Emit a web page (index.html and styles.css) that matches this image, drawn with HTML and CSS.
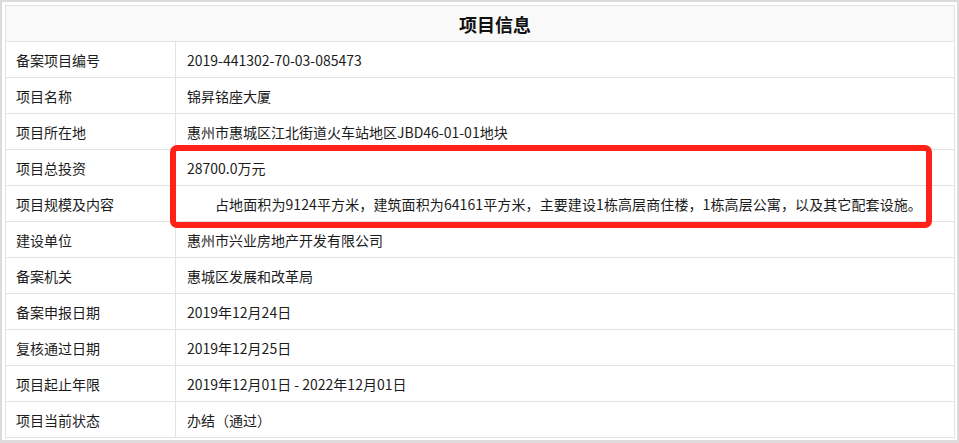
FILE: index.html
```html
<!DOCTYPE html>
<html lang="zh-CN">
<head>
<meta charset="utf-8">
<title>项目信息</title>
<link rel="stylesheet" href="styles.css">
</head>
<body>
<div class="panel">
  <table class="info">
    <colgroup>
      <col class="col-label">
      <col class="col-value">
    </colgroup>
    <thead>
      <tr><th colspan="2" class="title">项目信息</th></tr>
    </thead>
    <tbody>
      <tr><td class="label">备案项目编号</td><td class="value">2019-441302-70-03-085473</td></tr>
      <tr><td class="label">项目名称</td><td class="value">锦昇铭座大厦</td></tr>
      <tr><td class="label">项目所在地</td><td class="value">惠州市惠城区江北街道火车站地区JBD46-01-01地块</td></tr>
      <tr><td class="label">项目总投资</td><td class="value">28700.0万元</td></tr>
      <tr><td class="label">项目规模及内容</td><td class="value indent">占地面积为9124平方米，建筑面积为64161平方米，主要建设1栋高层商住楼，1栋高层公寓，以及其它配套设施。</td></tr>
      <tr><td class="label">建设单位</td><td class="value">惠州市兴业房地产开发有限公司</td></tr>
      <tr><td class="label">备案机关</td><td class="value">惠城区发展和改革局</td></tr>
      <tr><td class="label">备案申报日期</td><td class="value">2019年12月24日</td></tr>
      <tr><td class="label">复核通过日期</td><td class="value">2019年12月25日</td></tr>
      <tr><td class="label">项目起止年限</td><td class="value">2019年12月01日 - 2022年12月01日</td></tr>
      <tr><td class="label">项目当前状态</td><td class="value">办结（通过）</td></tr>
    </tbody>
  </table>
  <div class="highlight"></div>
</div>
</body>
</html>
```
FILE: styles.css
```css
html, body {
  margin: 0;
  padding: 0;
}
body {
  background: #dcdada;
  width: 959px;
  height: 443px;
  overflow: hidden;
  font-family: "Noto Sans CJK SC", "Noto Sans", sans-serif;
  color: #1c1c1c;
}
.panel {
  position: relative;
  margin: 2px 2px 0 2px;
  background: #fff;
  padding: 3px 2px 2px 3px;
}
.info {
  width: 950px;
  border-collapse: collapse;
  table-layout: fixed;
  font-size: 14px;
}
.col-label {
  width: 170px;
}
.info th,
.info td {
  border: 1px solid #e3e3e3;
  height: 36px;
  padding: 0;
  box-sizing: border-box;
  white-space: nowrap;
  vertical-align: middle;
  line-height: 20px;
}
.info .title {
  background: #f9f9f9;
  font-size: 18px;
  font-weight: bold;
  text-align: center;
  padding-left: 30px;
  color: #111;
}
.info .label {
  padding-left: 10px;
}
.info .value {
  padding-left: 11px;
}
.info .indent {
  text-indent: 28px;
  letter-spacing: 0.1px;
}
.highlight {
  position: absolute;
  left: 168px;
  top: 143px;
  width: 762px;
  height: 83px;
  box-sizing: border-box;
  border: 6px solid #ff2219;
  border-radius: 7px;
  pointer-events: none;
}
```
